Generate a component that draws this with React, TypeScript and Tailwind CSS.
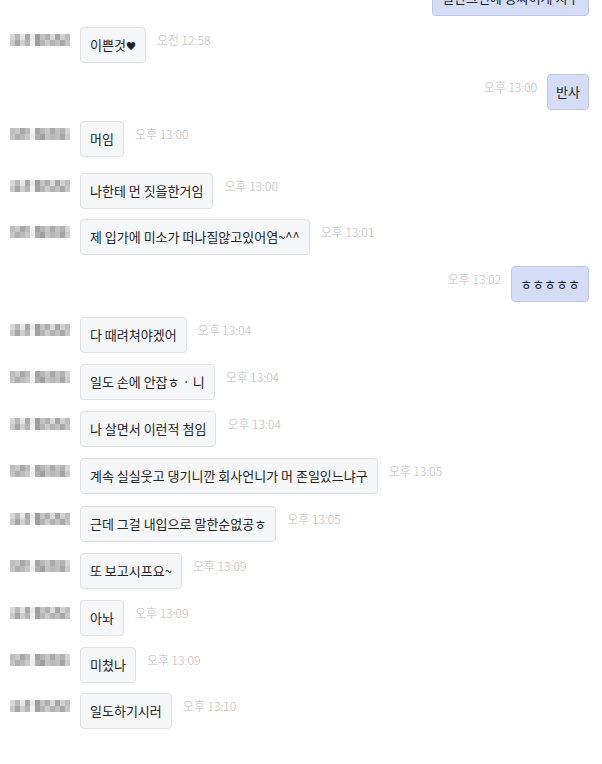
import React from "react";

const font = { fontFamily: '"Noto Sans CJK KR", "Noto Sans", sans-serif' };

const patA = [
  ["#d8d8d8", "#b9b9b9", "#e4e4e4", "#a9a9a9", "#e9e9e9", "#9d9d9d", "#c4c4c4", "#b0b0b0", "#dadada", "#a6a6a6", "#d0d0d0", "#bdbdbd"],
  ["#c9c9c9", "#a4a4a4", "#cfcfcf", "#b6b6b6", "#f0f0f0", "#a0a0a0", "#b5b5b5", "#cbcbcb", "#b3b3b3", "#c0c0c0", "#a8a8a8", "#c6c6c6"],
];
const patB = [
  ["#bdbdbd", "#c8c8c8", "#a7a7a7", "#bcbcbc", "#f2f2f2", "#a3a3a3", "#b7b7b7", "#c7c7c7", "#aaaaaa", "#c2c2c2", "#b2b2b2", "#d6d6d6"],
  ["#c4c4c4", "#b0b0b0", "#bbbbbb", "#c9c9c9", "#eeeeee", "#aeaeae", "#9f9f9f", "#c3c3c3", "#b8b8b8", "#bfbfbf", "#a5a5a5", "#cccccc"],
];

function Mosaic({ v }: { v: number }) {
  const p = v % 2 === 0 ? patA : patB;
  return (
    <svg width="62" height="12" viewBox="0 0 62 12" className="block">
      {p.map((row, r) =>
        row.map((c, i) => (
          <rect key={`${r}-${i}`} x={i * 5 + 1} y={r * 6} width="5" height="6" fill={c} />
        ))
      )}
    </svg>
  );
}

type Msg = { me?: boolean; text: React.ReactNode; time: string; mt: string };

const msgs: Msg[] = [
  { text: <>이쁜것<span className="text-[10px]">♥</span></>, time: "오전 12:58", mt: "mt-[11px]" },
  { me: true, text: "반사", time: "오후 13:00", mt: "mt-[11px]" },
  { text: "머임", time: "오후 13:00", mt: "mt-[11px]" },
  { text: "나한테 먼 짓을한거임", time: "오후 13:00", mt: "mt-[16px]" },
  { text: "제 입가에 미소가 떠나질않고있어염~^^", time: "오후 13:01", mt: "mt-[10px]" },
  { me: true, text: "ㅎㅎㅎㅎㅎ", time: "오후 13:02", mt: "mt-[11px]" },
  { text: "다 때려쳐야겠어", time: "오후 13:04", mt: "mt-[15px]" },
  { text: "일도 손에 안잡ㅎ · 니", time: "오후 13:04", mt: "mt-[11px]" },
  { text: "나 살면서 이런적 첨임", time: "오후 13:04", mt: "mt-[11px]" },
  { text: "계속 실실웃고 댕기니깐 회사언니가 머 존일있느냐구", time: "오후 13:05", mt: "mt-[11px]" },
  { text: "근데 그걸 내입으로 말한순없공ㅎ", time: "오후 13:05", mt: "mt-[12px]" },
  { text: "또 보고시프요~", time: "오후 13:09", mt: "mt-[11px]" },
  { text: "아놔", time: "오후 13:09", mt: "mt-[11px]" },
  { text: "미쳤나", time: "오후 13:09", mt: "mt-[11px]" },
  { text: "일도하기시러", time: "오후 13:10", mt: "mt-[10px]" },
];

function Time({ t }: { t: string }) {
  return (
    <div className="text-[12px] leading-[14px] text-[#bababa] font-light mt-[6px] whitespace-nowrap" style={font}>
      {t}
    </div>
  );
}

export default function App() {
  let left = 0;
  return (
    <div className="w-[602px] h-[764px] overflow-hidden bg-white" style={font}>
      <div className="flex flex-col">
        <div className="flex justify-end items-start pr-[13px] gap-[10px] -mt-[20px]">
          <div className="text-[12px] leading-[14px] text-[#e2e2e2] font-light mt-[4px] whitespace-nowrap">오후 12:59</div>
          <div className="h-[36px] w-[157px] flex items-center px-[9px] rounded-[4px] bg-[#d5ddf6] border border-[#bcc6e6] text-[13px] text-[#222] whitespace-nowrap overflow-hidden">
            일단그건에 공짜이게 지구
          </div>
        </div>
        {msgs.map((m, i) => {
          if (m.me) {
            return (
              <div key={i} className={`flex justify-end items-start pr-[13px] gap-[10px] ${m.mt}`}>
                <Time t={m.time} />
                <div className="h-[36px] flex items-center px-[8px] rounded-[4px] bg-[#d5ddf6] border border-[#bcc6e6] text-[13px] text-[#222] whitespace-nowrap">
                  {m.text}
                </div>
              </div>
            );
          }
          const v = left++;
          return (
            <div key={i} className={`flex items-start ${m.mt}`}>
              <div className="w-[80px] pl-[9px] pt-[7px] shrink-0">
                <Mosaic v={v} />
              </div>
              <div className="h-[36px] flex items-center px-[9px] rounded-[4px] bg-[#f6f7f9] border border-[#dfe1e5] text-[13px] text-[#222] whitespace-nowrap">
                {m.text}
              </div>
              <div className="ml-[11px]">
                <Time t={m.time} />
              </div>
            </div>
          );
        })}
      </div>
    </div>
  );
}
